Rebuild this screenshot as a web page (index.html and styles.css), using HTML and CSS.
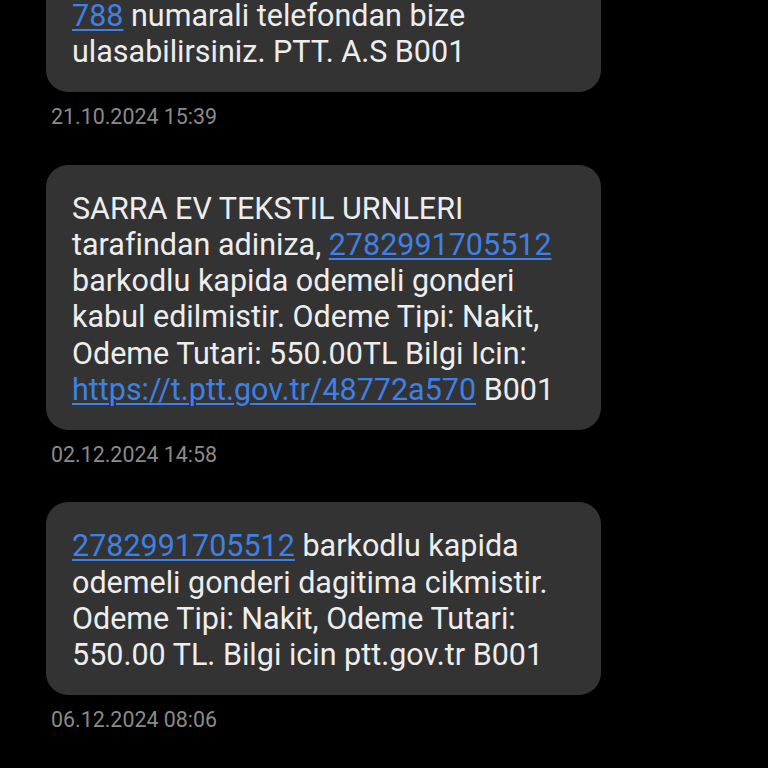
FILE: index.html
```html
<!DOCTYPE html>
<html lang="tr">
<head>
    <meta charset="UTF-8">
    <meta name="viewport" content="width=device-width, initial-scale=1.0">
    <title>Mesajlar - PTT</title>
    <link rel="stylesheet" href="styles.css">
</head>
<body>
    <div class="thread">
        <div class="msg">
            <div class="bubble">
                <a href="#">788</a> numarali telefondan bize<br>
                ulasabilirsiniz. PTT. A.S B001
            </div>
            <div class="time">21.10.2024 15:39</div>
        </div>

        <div class="msg">
            <div class="bubble">
                SARRA EV TEKSTIL URNLERI<br>
                tarafindan adiniza, <a href="#">2782991705512</a><br>
                barkodlu kapida odemeli gonderi<br>
                kabul edilmistir. Odeme Tipi: Nakit,<br>
                Odeme Tutari: 550.00TL Bilgi Icin:<br>
                <a href="#">https://t.ptt.gov.tr/48772a570</a> B001
            </div>
            <div class="time">02.12.2024 14:58</div>
        </div>

        <div class="msg">
            <div class="bubble">
                <a href="#">2782991705512</a> barkodlu kapida<br>
                odemeli gonderi dagitima cikmistir.<br>
                Odeme Tipi: Nakit, Odeme Tutari:<br>
                550.00 TL. Bilgi icin ptt.gov.tr B001
            </div>
            <div class="time">06.12.2024 08:06</div>
        </div>

        <div class="msg">
            <div class="bubble bubble-next"></div>
        </div>
    </div>
</body>
</html>
```

FILE: styles.css
```css
/* Message thread, dark mode */
body {
    margin: 0;
    padding: 0;
    background: #000;
    font-family: Roboto, 'Noto Sans', sans-serif;
    color: #ededed;
    overflow: hidden;
}

.thread {
    margin-top: -28px;
    padding-left: 46px;
}

.msg {
    margin-bottom: 35.5px;
}

.bubble {
    width: 555px;
    box-sizing: border-box;
    padding: 26px 18px 21.5px 26px;
    background-color: #333333;
    border-radius: 22px;
    font-size: 30.5px;
    line-height: 36.3px;
}

.bubble-next {
    height: 80px;
}

.bubble a {
    color: #3f80e4;
    text-decoration: underline;
    text-decoration-thickness: 1.5px;
    text-underline-offset: 3px;
}

.time {
    margin-top: 13px;
    padding-left: 5px;
    font-size: 21.4px;
    line-height: 24px;
    color: #8a8a8a;
}
```
